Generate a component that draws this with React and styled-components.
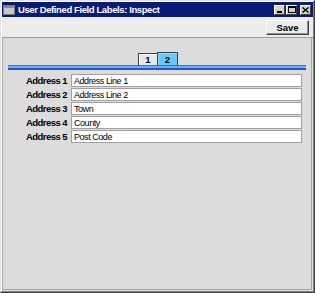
import styled, { createGlobalStyle } from "styled-components";

const GlobalStyle = createGlobalStyle`
  html, body {
    margin: 0;
    padding: 0;
    background: #dcdcdc;
  }
  * {
    box-sizing: border-box;
  }
`;

const Window = styled.div`
  width: 315px;
  height: 293px;
  display: flex;
  flex-direction: column;
  background: #dcdcdc;
  border: 1px solid;
  border-color: #e4e4e4 #404040 #404040 #e4e4e4;
  padding: 1px;
  box-shadow: inset -1px -1px #808080, inset 1px 1px #ffffff;
  font-family: "Liberation Sans", Arial, sans-serif;
`;

const TitleBar = styled.div`
  height: 15px;
  flex: none;
  display: flex;
  align-items: center;
  padding: 0 2px 0 1px;
  background: #0a1a78;
  color: #fff;
`;

const TitleText = styled.span`
  margin-left: 3px;
  font-size: 9.5px;
  font-weight: bold;
  letter-spacing: -0.4px;
  white-space: nowrap;
  flex: 1;
`;

const Controls = styled.div`
  display: flex;
  gap: 1px;
`;

const ControlButton = styled.div`
  width: 11px;
  height: 10px;
  margin-left: ${(p) => (p.$gap ? "2px" : "0")};
  display: flex;
  align-items: center;
  justify-content: center;
  background: #d4d0c8;
  border: 1px solid;
  border-color: #ffffff #404040 #404040 #ffffff;
`;

const Toolbar = styled.div`
  height: 21px;
  flex: none;
  display: flex;
  align-items: center;
  justify-content: flex-end;
  padding-right: 4px;
  background: #ececec;
  border-bottom: 1px solid #9a9a9a;
`;

const SaveButton = styled.button`
  width: 43px;
  height: 15px;
  padding: 0;
  display: flex;
  align-items: center;
  justify-content: center;
  background: #ececec;
  border: 1px solid;
  border-color: #ffffff #404040 #404040 #ffffff;
  box-shadow: inset -1px -1px #909090;
  font-family: "Liberation Sans", Arial, sans-serif;
  font-size: 9.5px;
  font-weight: bold;
  color: #000;
`;

const Content = styled.div`
  flex: 1;
  display: flex;
  flex-direction: column;
  padding-top: 14px;
  border-left: 1px solid #a8a8a8;
  border-right: 1px solid #a8a8a8;
  border-bottom: 1px solid #a8a8a8;
  margin-right: 1px;
  margin-bottom: 1px;
`;

const TabStrip = styled.div`
  width: 298px;
  margin-left: 5px;
  display: flex;
  flex-direction: column;
`;

const TabRow = styled.div`
  display: flex;
  justify-content: center;
  align-items: flex-end;
  padding-left: 2px;
`;

const Tab = styled.div`
  width: ${(p) => (p.$active ? "21px" : "20px")};
  height: ${(p) => (p.$active ? "13px" : "12px")};
  margin-left: ${(p) => (p.$active ? "-1px" : "0")};
  display: flex;
  align-items: center;
  justify-content: center;
  background: ${(p) => (p.$active ? "#66c8ff" : "#e6e6e6")};
  border: 1px solid #404040;
  border-bottom: none;
  border-radius: 1px 1px 0 0;
  box-shadow: inset 1px 1px ${(p) => (p.$active ? "#9adcff" : "#ffffff")};
  font-size: 9.5px;
  font-weight: bold;
  color: #000;
`;

const Band = styled.div`
  height: 5px;
  background: #62b2fa;
  border-top: 1px solid #3a6ed8;
  border-bottom: 2px solid #2a56c8;
`;

const Fields = styled.div`
  margin-top: 4px;
  display: flex;
  flex-direction: column;
  gap: 1px;
`;

const Row = styled.div`
  display: flex;
  align-items: center;
  gap: 4px;
  height: 13px;
`;

const Label = styled.label`
  width: 64px;
  text-align: right;
  font-size: 9.5px;
  font-weight: bold;
  letter-spacing: -0.55px;
  color: #000;
  white-space: nowrap;
`;

const Field = styled.div`
  width: 231px;
  height: 13px;
  display: flex;
  align-items: center;
  padding-left: 2px;
  background: #fff;
  border: 1px solid #a0a0a0;
  font-size: 9px;
  letter-spacing: -0.45px;
  color: #000;
  white-space: nowrap;
`;

function WindowIcon() {
  return (
    <svg width="12" height="10" viewBox="0 0 12 10">
      <rect x="0.5" y="0.5" width="11" height="9" fill="#c8c8c8" stroke="#7a7a7a" />
      <rect x="1" y="1" width="10" height="2" fill="#8a8a8a" />
    </svg>
  );
}

const rows = [
  ["Address 1", "Address Line 1"],
  ["Address 2", "Address Line 2"],
  ["Address 3", "Town"],
  ["Address 4", "County"],
  ["Address 5", "Post Code"],
];

export default function App() {
  return (
    <>
      <GlobalStyle />
      <Window>
        <TitleBar>
          <WindowIcon />
          <TitleText>User Defined Field Labels: Inspect</TitleText>
          <Controls>
            <ControlButton>
              <svg width="7" height="6" viewBox="0 0 7 6">
                <rect x="1" y="4" width="5" height="2" fill="#000" />
              </svg>
            </ControlButton>
            <ControlButton>
              <svg width="8" height="7" viewBox="0 0 8 7">
                <rect x="0.5" y="0.5" width="7" height="6" fill="none" stroke="#000" />
                <rect x="0" y="0" width="8" height="2" fill="#000" />
              </svg>
            </ControlButton>
            <ControlButton $gap>
              <svg width="7" height="6" viewBox="0 0 7 6">
                <path d="M0.5 0.5 L6.5 5.5 M6.5 0.5 L0.5 5.5" stroke="#000" strokeWidth="1.4" />
              </svg>
            </ControlButton>
          </Controls>
        </TitleBar>
        <Toolbar>
          <SaveButton>Save</SaveButton>
        </Toolbar>
        <Content>
          <TabStrip>
            <TabRow>
              <Tab>1</Tab>
              <Tab $active>2</Tab>
            </TabRow>
            <Band />
          </TabStrip>
          <Fields>
            {rows.map(([label, value]) => (
              <Row key={label}>
                <Label>{label}</Label>
                <Field>{value}</Field>
              </Row>
            ))}
          </Fields>
        </Content>
      </Window>
    </>
  );
}
